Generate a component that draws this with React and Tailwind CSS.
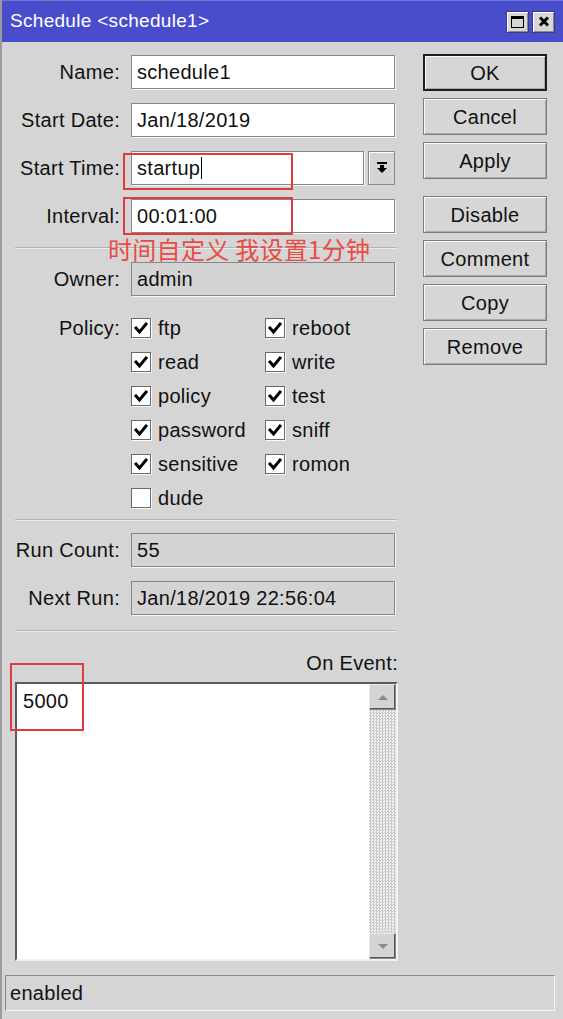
import React from "react";

const FONT = { fontFamily: '"Liberation Sans", Arial, sans-serif' };

function Check({ checked }) {
  return (
    <div className="w-[20px] h-[20px] bg-white border border-[#6a6a6a] shadow-[1px_1px_0_#fafafa] flex items-center justify-center shrink-0">
      {checked && (
        <svg width="14" height="14" viewBox="0 0 14 14">
          <path d="M2 7 L5.5 11 L12 3" fill="none" stroke="#000" strokeWidth="3" strokeLinecap="square" />
        </svg>
      )}
    </div>
  );
}

function Field({ value, disabled, className = "w-[264px]", children }) {
  return (
    <div
      className={`${className} h-[34px] border border-[#868686] shadow-[1px_1px_0_#f6f6f6] flex items-center pl-[5px] text-[20px] tracking-[0.3px] text-[#111] ${
        disabled ? "bg-[#d4d4d4]" : "bg-white"
      }`}
    >
      <span>{value}</span>
      {children}
    </div>
  );
}

function Row({ label, children }) {
  return (
    <div className="flex items-center h-[34px]">
      <div className="w-[118px] text-right text-[20px] tracking-[0.3px] text-[#111] shrink-0">{label}</div>
      <div className="ml-[11px] flex items-center">{children}</div>
    </div>
  );
}

function Sep({ className }) {
  return <div className={`ml-[13px] w-[382px] h-[2px] border-t border-[#b4b4b4] border-b border-b-[#ececec] ${className}`} />;
}

function Btn({ label, primary, className = "" }) {
  return (
    <div
      className={`w-[124px] h-[37px] flex items-center justify-center text-[20px] tracking-[0.3px] text-[#111] bg-[#d6d6d6] shadow-[inset_1px_1px_0_#fbfbfb,inset_-1px_-1px_0_#a9a9a9] ${
        primary ? "border-2 border-[#1e1e1e]" : "border border-[#7c7c7c]"
      } ${className}`}
    >
      {label}
    </div>
  );
}

function PolicyItem({ label, checked }) {
  return (
    <div className="flex items-center h-[20px] gap-[7px]">
      <Check checked={checked} />
      <span className="text-[20px] tracking-[0.3px] text-[#111] leading-none">{label}</span>
    </div>
  );
}

export default function App() {
  const left = [
    ["ftp", true],
    ["read", true],
    ["policy", true],
    ["password", true],
    ["sensitive", true],
    ["dude", false],
  ];
  const right = [
    ["reboot", true],
    ["write", true],
    ["test", true],
    ["sniff", true],
    ["romon", true],
  ];
  return (
    <div style={FONT} className="relative w-[563px] h-[1019px] bg-[#d5d5d5] border-l-2 border-[#9c9c9c] overflow-hidden">
      {/* Title bar */}
      <div className="h-[42px] bg-[#4a4dcb] border-t border-[#6f72dc] flex items-center pl-[8px] pr-[8px]">
        <div className="text-white text-[19px] tracking-[0.3px]">Schedule &lt;schedule1&gt;</div>
        <div className="ml-auto flex gap-[3px]">
          <div className="w-[23px] h-[22px] bg-[#d6d6d6] border border-[#3a3a8a] shadow-[inset_1px_1px_0_#fff,inset_-1px_-1px_0_#8a8a8a] flex items-center justify-center">
            <div className="w-[13px] h-[12px] border border-black border-t-[3px]" />
          </div>
          <div className="w-[23px] h-[22px] bg-[#d6d6d6] border border-[#3a3a8a] shadow-[inset_1px_1px_0_#fff,inset_-1px_-1px_0_#8a8a8a] flex items-center justify-center">
            <svg width="12" height="11" viewBox="0 0 12 11">
              <path d="M2 1.5 L10 9.5 M10 1.5 L2 9.5" stroke="#000" strokeWidth="3" />
            </svg>
          </div>
        </div>
      </div>

      <div className="flex">
        {/* Left column */}
        <div className="w-[396px] shrink-0 pt-[13px] flex flex-col">
          <div className="flex flex-col gap-[14px]">
            <Row label="Name:">
              <Field value="schedule1" />
            </Row>
            <Row label="Start Date:">
              <Field value="Jan/18/2019" />
            </Row>
            <Row label="Start Time:">
              <Field value="startup" className="w-[233px]">
                <span className="w-[1px] h-[22px] bg-black ml-[1px]" />
              </Field>
              <div className="ml-[4px] w-[27px] h-[34px] bg-[#d4d4d4] border border-[#8a8a8a] shadow-[inset_1px_1px_0_#fff] flex items-center justify-center">
                <svg width="12" height="14" viewBox="0 0 12 14">
                  <rect x="1" y="1" width="10" height="2" fill="#000" />
                  <path d="M4 4 H8 V7 H11 L6 12 L1 7 H4 Z" fill="#000" />
                </svg>
              </div>
            </Row>
            <Row label="Interval:">
              <Field value="00:01:00" />
            </Row>
          </div>

          <Sep className="mt-[14px]" />

          <div className="mt-[13px]">
            <Row label="Owner:">
              <Field value="admin" disabled />
            </Row>
          </div>

          <div className="mt-[22px] flex">
            <div className="w-[118px] text-right text-[20px] tracking-[0.3px] text-[#111] leading-[20px] shrink-0">Policy:</div>
            <div className="ml-[11px] flex">
              <div className="w-[134px] flex flex-col gap-[14px]">
                {left.map(([l, c]) => (
                  <PolicyItem key={l} label={l} checked={c} />
                ))}
              </div>
              <div className="flex flex-col gap-[14px]">
                {right.map(([l, c]) => (
                  <PolicyItem key={l} label={l} checked={c} />
                ))}
              </div>
            </div>
          </div>

          <Sep className="mt-[11px]" />

          <div className="mt-[12px] flex flex-col gap-[14px]">
            <Row label="Run Count:">
              <Field value="55" disabled />
            </Row>
            <Row label="Next Run:">
              <Field value="Jan/18/2019 22:56:04" disabled />
            </Row>
          </div>

          <Sep className="mt-[15px]" />

          <div className="mt-[20px] h-[22px] text-right text-[20px] tracking-[0.3px] text-[#111] leading-[22px]">On Event:</div>

          {/* Textarea */}
          <div className="mt-[8px] ml-[13px] w-[383px] h-[279px] bg-white border-2 border-t-[#5a5a5a] border-l-[#5a5a5a] border-r-[#f2f2f2] border-b-[#f2f2f2] flex">
            <div className="flex-1 pl-[6px] pt-[2px] text-[20px] tracking-[0.3px] text-[#111]">5000</div>
            <div className="w-[27px] flex flex-col">
              <div className="h-[26px] bg-[#d4d4d4] border border-[#8a8a8a] border-l-[#e8e8e8] border-t-[#e8e8e8] shadow-[inset_-1px_-1px_0_#555] flex items-center justify-center">
                <svg width="12" height="7" viewBox="0 0 12 7">
                  <path d="M1 6 L6 1 L11 6 Z" fill="#8a8a8a" />
                </svg>
              </div>
              <div className="flex-1 bg-[repeating-conic-gradient(#c8c8c8_0_25%,#f4f4f4_0_50%)] bg-[length:3px_3px]" />
              <div className="h-[26px] bg-[#d4d4d4] border border-[#8a8a8a] border-l-[#e8e8e8] border-t-[#e8e8e8] shadow-[inset_-1px_-1px_0_#555] flex items-center justify-center">
                <svg width="12" height="7" viewBox="0 0 12 7">
                  <path d="M1 1 L6 6 L11 1 Z" fill="#8a8a8a" />
                </svg>
              </div>
            </div>
          </div>
        </div>

        {/* Right column */}
        <div className="ml-[25px] pt-[12px] flex flex-col">
          <Btn label="OK" primary />
          <Btn label="Cancel" className="mt-[7px]" />
          <Btn label="Apply" className="mt-[7px]" />
          <Btn label="Disable" className="mt-[17px]" />
          <Btn label="Comment" className="mt-[7px]" />
          <Btn label="Copy" className="mt-[7px]" />
          <Btn label="Remove" className="mt-[7px]" />
        </div>
      </div>

      {/* Status bar */}
      <div className="mt-[14px] ml-[3px] w-[550px] h-[36px] border border-t-[#8a8a8a] border-l-[#8a8a8a] border-r-[#f4f4f4] border-b-[#f4f4f4] flex items-center pl-[4px] text-[20px] tracking-[0.3px] text-[#111]">
        enabled
      </div>

      {/* Red annotations */}
      <div className="absolute left-[121px] top-[153px] w-[170px] h-[37px] border-2 border-solid border-[#e23b3b]" />
      <div className="absolute left-[121px] top-[197px] w-[170px] h-[38px] border-2 border-solid border-[#e23b3b]" />
      <div className="absolute left-[8px] top-[663px] w-[74px] h-[68px] border-2 border-solid border-[#e23b3b]" />
      <div
        className="absolute left-[106px] top-[234px] text-[24px] tracking-[0.3px] leading-[30px] text-[#ea4a44] whitespace-nowrap"
        style={{ fontFamily: '"Noto Sans CJK SC", sans-serif' }}
      >
        时间自定义 我设置1分钟
      </div>
    </div>
  );
}
